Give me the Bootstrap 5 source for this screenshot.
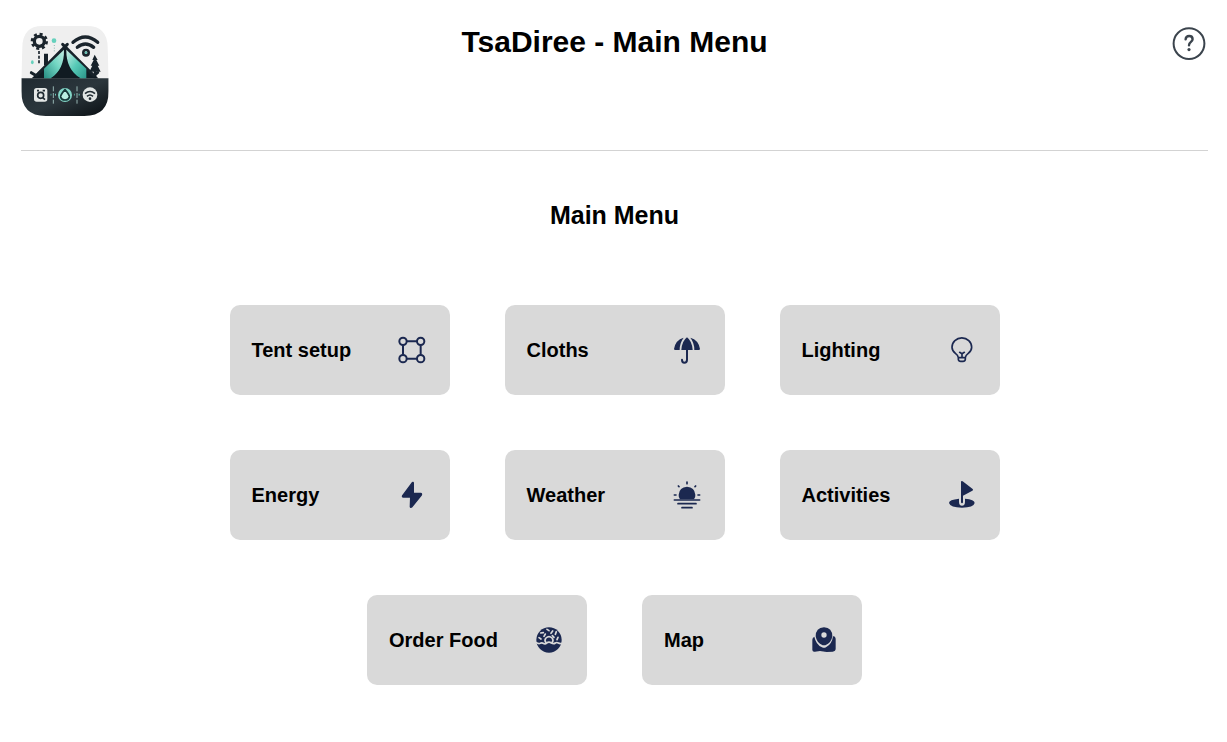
<!DOCTYPE html>
<html lang="en">
<head>
<meta charset="utf-8">
<meta name="viewport" content="width=device-width, initial-scale=1">
<title>TsaDiree - Main Menu</title>
<link href="https://cdn.jsdelivr.net/npm/bootstrap@5.3.0/dist/css/bootstrap.min.css" rel="stylesheet">
<style>
body { font-family: "Liberation Sans", Arial, sans-serif; color: #000; background: #fff; padding: 0 19px 0 21px; }
.top-bar { height: 151px; border-bottom: 1px solid #d3d3d3; padding-top: 25px; }
.side { flex: 1 1 0; }
.logo { width: 88px; height: 92px; }
.page-title { font-size: 30px; line-height: 34px; }
.help { width: 34px; height: 34px; margin: 2px 2px 0 0; }
.section-title { font-size: 25px; line-height: 30px; margin: 49px 0 75px; }
.menu { max-width: 770px; gap: 55px; }
.tile { width: 220px; height: 90px; background: #d9d9d9; border-radius: 10px; padding: 0 18px 0 22px; font-size: 20px; color: #000; --bs-btn-border-width: 0; }
.tile:hover { background: #ccc; }
.tile svg { width: 40px; height: 40px; color: #1b2850; }
</style>
</head>
<body>
<header class="top-bar d-flex align-items-start">
  <div class="side">
    <a href="#" class="d-inline-block" aria-label="TsaDiree home">
      <svg class="logo d-block" viewBox="18 14 264 276" preserveAspectRatio="none">
        <defs>
          <linearGradient id="base" x1="0" y1="0" x2="1" y2="1"><stop offset="0" stop-color="#202a31"/><stop offset=".5" stop-color="#2b363c"/><stop offset="1" stop-color="#080d11"/></linearGradient>
          <linearGradient id="leftFlap" x1="1" y1="0" x2="0" y2="1"><stop offset="0" stop-color="#c5eee4"/><stop offset=".45" stop-color="#72d6c3"/><stop offset="1" stop-color="#268c82"/></linearGradient>
          <linearGradient id="rightFlap" x1="0" y1="0" x2="1" y2="1"><stop offset="0" stop-color="#d0f0e8"/><stop offset=".5" stop-color="#58cbb8"/><stop offset="1" stop-color="#2b958a"/></linearGradient>
          <clipPath id="shape"><path d="M82 17H216Q278 17 278 82L281 174V212Q281 287 208 287H92Q19 287 19 212V174L22 82Q22 17 82 17Z"/></clipPath>
        </defs>
        <g clip-path="url(#shape)">
          <path fill="#efefef" d="M18 14h264v162H18z"/>
          <path fill="url(#base)" d="M18 174h264v116H18z"/>
          <g fill="none" stroke="#1b252d">
            <circle cx="73" cy="63" r="15" stroke-width="10"/>
            <circle cx="73" cy="63" r="22" stroke-width="8" stroke-dasharray="9 8.3"/>
            <path d="M174 66Q211 34 248 66M187 81Q211 61 236 81" stroke-width="10" stroke-linecap="round"/>
            <circle cx="213" cy="97" r="8" stroke-width="8"/>
            <path d="M72 92v40" stroke-width="5" stroke-dasharray="9 5"/>
          </g>
          <circle cx="213" cy="97" r="4" fill="#61bcae"/>
          <circle cx="117" cy="61" r="7" fill="#66d1bd"/><ellipse cx="52" cy="126" rx="4" ry="6" fill="#66d1bd"/>
          <path d="M118 74v19" stroke="#90b8b2" stroke-width="3" stroke-dasharray="3 5"/>
          <path fill="#17222a" d="M87 100h12v35H87zM239 103l9 16h-4l9 17h-5l9 18h-13v20h-8v-20h-13l9-18h-5l9-17h-4z"/>
          <path fill="#101b23" d="M150 79L250 174H50Z"/>
          <path fill="none" stroke="#17222a" stroke-width="9" stroke-linecap="round" stroke-linejoin="round" d="M143 72L236 166l12-9M157 72L64 166l-15-9"/>
          <path fill="url(#leftFlap)" d="M147 88Q148 148 107 174H87V145Z"/>
          <path fill="url(#rightFlap)" d="M154 88L214 145V174H197Q153 148 154 88Z"/>
          <path fill="#111b22" d="M150 89Q151 145 193 174H109Q150 145 150 89Z"/>
          <rect x="57" y="203" width="40" height="41" rx="8" fill="#e4e7e6"/>
          <circle cx="77" cy="225" r="9" fill="none" stroke="#202b32" stroke-width="5"/>
          <path d="M83 232l7 6M66 211h6M83 211h7" stroke="#202b32" stroke-width="5"/>
          <path d="M115 198v52M186 198v52" stroke="#97b5b3" stroke-width="3" stroke-dasharray="15 5"/>
          <path d="M107 223h2M120 223h3M178 223h2M191 223h3" stroke="#68cbbb" stroke-width="5"/>
          <circle cx="150" cy="224" r="21" fill="#83d6c7"/>
          <path fill="#b9eee2" stroke="#17393a" stroke-width="5" d="M150 208q14 16 13 22-2 9-13 9t-13-9q-1-6 13-22Z"/>
          <circle cx="225" cy="223" r="22" fill="#e1e5e4"/>
          <path fill="none" stroke="#202b32" stroke-width="5" d="M210 220q15-13 30 0M216 228q9-8 18 0"/><circle cx="225" cy="235" r="4" fill="#202b32"/>
        </g>
      </svg>
    </a>
  </div>
  <h1 class="page-title fw-bold mb-0">TsaDiree - Main Menu</h1>
  <div class="side d-flex justify-content-end">
    <button type="button" class="help btn border-0 p-0 d-flex" aria-label="Help">
      <svg width="34" height="34" viewBox="0 0 34 34" fill="none" stroke="#3b444d" stroke-width="2"><circle cx="17" cy="16.6" r="15.4"/><path stroke-width="2.4" stroke-linecap="round" d="M13.6 12.4C13.8 10 15.2 9 17.2 9C19.3 9 20.6 10.3 20.6 12.2C20.6 15 17 14.8 17 18.2"/><circle cx="17" cy="22.6" r="1.6" fill="#3b444d" stroke="none"/></svg>
    </button>
  </div>
</header>
<main>
  <h2 class="section-title text-center fw-bold">Main Menu</h2>
  <nav class="menu d-flex flex-wrap justify-content-center mx-auto" aria-label="Main menu">
    <button type="button" class="tile btn fw-bold d-flex align-items-center justify-content-between">Tent setup
      <svg viewBox="0 0 120 120" fill="none" stroke="currentColor" stroke-width="6"><path d="M45 34h30M45 86h30M33 46v28M86 46v28"/><circle cx="33" cy="34" r="11"/><circle cx="86" cy="34" r="11"/><circle cx="33" cy="86" r="11"/><circle cx="86" cy="86" r="11"/></svg>
    </button>
    <button type="button" class="tile btn fw-bold d-flex align-items-center justify-content-between">Cloths
      <svg viewBox="0 0 120 120" fill="currentColor"><path d="M50 23Q25 30 21 57q0 3 4 3h13Q38 38 50 23ZM70 23Q95 30 99 57q0 3-4 3H82Q82 38 70 23ZM60 22Q45 33 43 60h34Q75 33 60 22Z"/><path fill="none" stroke="currentColor" stroke-width="6" stroke-linecap="round" d="M60 57v32q0 9-8 9-7 0-7-9"/></svg>
    </button>
    <button type="button" class="tile btn fw-bold d-flex align-items-center justify-content-between">Lighting
      <svg viewBox="0 0 120 120" fill="none" stroke="currentColor" stroke-width="5" stroke-linejoin="round" stroke-linecap="round"><path d="M49 83Q48 76 41 71Q30 63 30 52A29 28 0 0 1 89 52Q89 63 78 71Q71 76 70 83ZM49 83v5q1 6 7 6h7q6 0 7-6v-5M53 67l7 4 7-4M60 71v11"/></svg>
    </button>
    <button type="button" class="tile btn fw-bold d-flex align-items-center justify-content-between">Energy
      <svg viewBox="0 0 120 120" fill="currentColor" stroke="currentColor" stroke-width="4" stroke-linejoin="round"><path d="M61 23L32 62q-2 4 2 4h22l-1 29q1 3 4 1L88 60q2-4-2-5H64V24q0-3-3-1Z"/></svg>
    </button>
    <button type="button" class="tile btn fw-bold d-flex align-items-center justify-content-between">Weather
      <svg viewBox="0 0 120 120" fill="currentColor"><path d="M39 73Q34 65 35 59Q37 36 60 35Q83 36 85 59Q86 65 81 73Z"/><path stroke="currentColor" stroke-width="5" stroke-linecap="round" d="M22 75h76M33 86h54M45 98h30M60 21v5M34 33l2 2M86 33l-2 2M22 60h5M93 60h5"/></svg>
    </button>
    <button type="button" class="tile btn fw-bold d-flex align-items-center justify-content-between">Activities
      <svg viewBox="0 0 120 120" fill="currentColor"><path d="M51 71v9q0 12 9 12t9-12v-9Q98 73 98 84Q95 98 60 98T21 84Q21 74 51 71Z"/><path d="M57 81V21q0-4 5-2l30 23q3 3-1 5L63 62v19q0 4-3 4t-3-4Z"/></svg>
    </button>
    <button type="button" class="tile btn fw-bold d-flex align-items-center justify-content-between">Order Food
      <svg viewBox="0 0 120 120"><circle cx="60" cy="60" r="38" fill="currentColor"/><g fill="none" stroke="#d9d9d9" stroke-width="5" stroke-linecap="round"><path d="M22 68q6 4 12 2 5-3 8 0 7 4 11-1 7-5 14 0 7 4 12 0 4-3 9 0 5 3 10 1"/><path d="M51 68q-6-8 0-14 9-8 18 0 6 6 0 14M30 53l6 4M35 39l8-1M49 42l-4 7M54 28l6 4M66 40l5-7M82 35l-3 8M70 47l5 5M87 52l-3 7"/></g></svg>
    </button>
    <button type="button" class="tile btn fw-bold d-flex align-items-center justify-content-between">Map
      <svg viewBox="0 0 120 120" fill="currentColor"><path fill-rule="evenodd" d="M60 22q-25 2-25 27 3 20 21 27h8q18-7 21-27 0-25-25-27Zm0 15a8 8 0 1 1 0 16 8 8 0 0 1 0-16Z"/><path d="M31 50q-6 3-6 9v31q1 7 8 5l15-2 20 3 18-1q9-2 9-9V56q-1-8-8-7Q84 73 66 82q-6 3-12 0Q36 74 31 50Z"/></svg>
    </button>
  </nav>
</main>
<script src="https://cdn.jsdelivr.net/npm/bootstrap@5.3.0/dist/js/bootstrap.bundle.min.js"></script>
</body>
</html>
